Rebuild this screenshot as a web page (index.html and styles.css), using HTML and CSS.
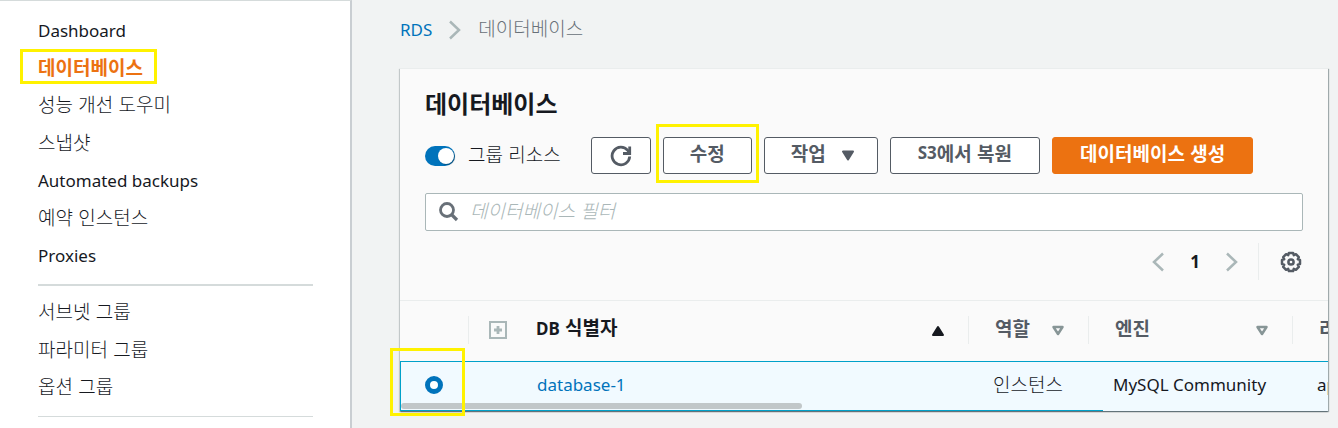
FILE: index.html
```html
<!DOCTYPE html>
<html lang="ko">
<head>
<meta charset="utf-8">
<title>RDS - 데이터베이스</title>
<link rel="stylesheet" href="styles.css">
</head>
<body>
<div class="app">
  <nav class="sidebar">
    <ul class="nav-list">
      <li><a href="#" lang="en">Dashboard</a></li>
      <li><a href="#" class="active">데이터베이스</a><span class="mark mark-nav"></span></li>
      <li><a href="#">성능 개선 도우미</a></li>
      <li><a href="#">스냅샷</a></li>
      <li><a href="#" lang="en">Automated backups</a></li>
      <li><a href="#">예약 인스턴스</a></li>
      <li><a href="#" lang="en">Proxies</a></li>
    </ul>
    <ul class="nav-list nav-groups">
      <li><a href="#">서브넷 그룹</a></li>
      <li><a href="#">파라미터 그룹</a></li>
      <li><a href="#">옵션 그룹</a></li>
    </ul>
    <ul class="nav-list nav-rest"></ul>
  </nav>

  <main class="main">
    <div class="breadcrumb">
      <a href="#" lang="en">RDS</a>
      <svg width="12" height="20" viewBox="0 0 12 20" fill="none" stroke="#aab7b8" stroke-width="2.5"><path d="M1 1.500L10 10L1 18.500"/></svg>
      <span class="current">데이터베이스</span>
    </div>

    <section class="panel">
      <div class="panel-top">
        <h1>데이터베이스</h1>
        <div class="toolbar">
          <label class="toggle"><input type="checkbox" role="switch" checked><span>그룹 리소스</span></label>
          <button class="btn btn-icon" aria-label="새로 고침">
            <svg width="22" height="22" viewBox="0 0 22 22" fill="none" stroke="#545b64" stroke-width="2.800"><path d="M19.700 11.500A8.800 8.800 0 1 1 17.800 5.500L19.500 7.800"/><path d="M13 8.500H19.700V1.500"/></svg>
          </button>
          <div class="marked"><button class="btn">수정</button><span class="mark mark-btn"></span></div>
          <button class="btn btn-menu">작업
            <svg width="14" height="12" viewBox="0 0 14 12"><path d="M2 1.500H12L7 9.500Z" fill="#545b64" stroke="#545b64" stroke-width="2" stroke-linejoin="round"/></svg>
          </button>
          <button class="btn btn-wide"><span lang="en">S3</span>에서 복원</button>
          <button class="btn btn-wide btn-primary">데이터베이스 생성</button>
        </div>
        <label class="search">
          <svg width="20" height="20" viewBox="0 0 20 20" fill="none" stroke="#687078"><circle cx="8" cy="8" r="6.500" stroke-width="2.800"/><path d="M12.500 12.500L18 18" stroke-width="3.200"/></svg>
          <input type="text" placeholder="데이터베이스 필터" aria-label="데이터베이스 필터">
        </label>
        <div class="pager">
          <button class="plain" aria-label="이전"><svg width="12" height="20" viewBox="0 0 12 20" fill="none" stroke="#aab7b8" stroke-width="2.500"><path d="M11 1.500L2 10L11 18.500"/></svg></button>
          <button class="plain page" lang="en">1</button>
          <button class="plain" aria-label="다음"><svg width="12" height="20" viewBox="0 0 12 20" fill="none" stroke="#aab7b8" stroke-width="2.500"><path d="M1 1.500L10 10L1 18.500"/></svg></button>
          <button class="plain settings" aria-label="설정">
            <svg width="22" height="22" viewBox="0 0 22 22" fill="none" stroke="#545b64" stroke-width="2.500" stroke-linejoin="round"><path d="M8.900 2H13.100L13.800 4.200L15.900 3.200L18.800 6.100L17.800 8.200L20 8.900V13.100L17.800 13.800L18.800 15.900L15.900 18.800L13.800 17.800L13.100 20H8.900L8.200 17.800L6.100 18.800L3.200 15.900L4.200 13.800L2 13.100V8.900L4.200 8.200L3.200 6.100L6.100 3.200L8.200 4.200Z"/><circle cx="11" cy="11" r="2.600"/></svg>
          </button>
        </div>
      </div>

      <div class="table-frame">
        <div class="table-clip">
          <table>
            <colgroup><col class="c-pick"><col class="c-id"><col class="c-role"><col class="c-engine"><col class="c-region"></colgroup>
            <thead>
              <tr>
                <th></th>
                <th class="sorted"><div class="head">
                  <svg class="expand" width="18" height="18" viewBox="0 0 18 18" fill="none" stroke="#aab7b8" stroke-width="2"><rect x="1" y="1" width="16" height="16"/><path d="M9 5V13M5 9H13" stroke-width="2.800"/></svg>
                  <span><span lang="en">DB</span> 식별자</span>
                  <svg class="sort" width="14" height="12" viewBox="0 0 14 12"><path d="M2 10L7 2L12 10Z" fill="#16191f" stroke="#16191f" stroke-width="2" stroke-linejoin="round"/></svg>
                </div></th>
                <th><div class="head">역할
                  <svg class="sort" width="14" height="12" viewBox="0 0 14 12"><path d="M2.500 2H11.500L7 9Z" fill="none" stroke="#879596" stroke-width="2.500" stroke-linejoin="round"/></svg>
                </div></th>
                <th><div class="head">엔진
                  <svg class="sort" width="14" height="12" viewBox="0 0 14 12"><path d="M2.500 2H11.500L7 9Z" fill="none" stroke="#879596" stroke-width="2.500" stroke-linejoin="round"/></svg>
                </div></th>
                <th><div class="head">리</div></th>
              </tr>
            </thead>
            <tbody>
              <tr>
                <td class="pick"><input type="radio" name="db" checked aria-label="database-1"></td>
                <td class="id"><a href="#" lang="en">database-1</a></td>
                <td>인스턴스</td>
                <td lang="en">MySQL Community</td>
                <td lang="en">ap</td>
              </tr>
            </tbody>
          </table>
        </div>
        <span class="scroll-thumb"></span>
        <span class="mark mark-row"></span>
      </div>
    </section>
  </main>
</div>
</body>
</html>
```
FILE: styles.css
```css
* { box-sizing: border-box; }

body {
  margin: 0;
  background: #f1f3f3;
  color: #16191f;
  font: 300 19px/24px "Noto Sans CJK KR", sans-serif;
}

[lang="en"] { font-family: "Noto Sans", sans-serif; font-size: 17px; font-weight: 400; }

a { color: #0073bb; text-decoration: none; }
svg { display: block; flex: none; }
button { font: inherit; color: inherit; cursor: pointer; }

.app { display: flex; min-height: 100vh; }

/* Side navigation */
.sidebar {
  flex: none;
  width: 352px;
  padding: 11px 37px 0 38px;
  background: #fff;
  border-top: 1px solid #d5dbdb;
  border-right: 2px solid #c9ced2;
}
.nav-list { list-style: none; margin: 0; padding: 0; }
.nav-list li { position: relative; display: flex; align-items: center; height: 37px; }
.nav-list li:nth-child(even) { height: 38px; }
.nav-list a { color: #16191f; }
.nav-list a:not([lang]) { padding-bottom: 3px; }
.nav-list .active { color: #ec7211; font-weight: 700; }
.nav-groups { margin-top: 10px; padding: 8px 0 10px; border-top: 2px solid #d5dbdb; }
.nav-rest { border-top: 1px solid #d5dbdb; }

/* Yellow call-out frames */
.mark { position: absolute; border: 3px solid #fff200; pointer-events: none; }
.mark-nav { left: -18px; top: 0; width: 137px; height: 35px; }
.mark-btn { inset: -13px -7px -9px; }
.mark-row { left: -10px; top: 47px; width: 75px; height: 68px; }

.main { flex: 1; min-width: 0; padding: 18px 10px 16px 48px; }

.breadcrumb { display: flex; align-items: center; gap: 17px; height: 24px; margin-bottom: 26px; }
.current { padding-bottom: 4px; color: #687078; }

/* Database panel */
.panel {
  background: #fafafa;
  border-top: 1px solid #eaeded;
  box-shadow: 0 1px 1px 0 rgba(0, 28, 36, .3), 1px 1px 1px 0 rgba(0, 28, 36, .3), -1px 1px 1px 0 rgba(0, 28, 36, .15);
}
.panel-top { padding: 18px 25px 20px; border-bottom: 1px solid #eaeded; }
h1 { margin: 0 0 18px; font-size: 24px; line-height: 32px; font-weight: 700; }

.toolbar { display: flex; align-items: center; gap: 12px; margin-bottom: 19px; }
.toggle { display: flex; align-items: center; gap: 13px; margin-right: 18px; }
.toggle span { padding-bottom: 4px; }
.toggle input {
  appearance: none;
  display: flex;
  justify-content: flex-end;
  width: 30px;
  height: 20px;
  margin: 0;
  padding: 2px 1px;
  border-radius: 10px;
  background: #0073bb;
}
.toggle input::before {
  content: "";
  width: 16px;
  height: 16px;
  border-radius: 50%;
  background: #fff;
  box-shadow: 1px 1px 1px rgba(0, 0, 0, .3);
}
.btn {
  display: flex;
  align-items: center;
  justify-content: center;
  height: 37px;
  padding: 0 26px 5px;
  border: 1px solid #545b64;
  border-radius: 3px;
  background: #fff;
  color: #545b64;
  font-weight: 700;
  white-space: nowrap;
}
.btn-icon { width: 60px; padding: 0; }
.btn-menu { gap: 15px; padding-right: 22px; }
.btn-menu svg { margin-top: 6px; }
.btn-wide { padding-left: 27px; padding-right: 27px; }
.btn-primary { border-color: #ec7211; background: #ec7211; color: #fff; }
.btn [lang], .head [lang], .plain.page { font-weight: 700; }
.marked { position: relative; }

.search {
  display: flex;
  align-items: center;
  gap: 11px;
  height: 38px;
  padding: 0 13px;
  border: 1px solid #aab7b8;
  border-radius: 2px;
  background: #fff;
}
.search input {
  flex: 1;
  min-width: 0;
  height: 32px;
  padding: 0 0 6px;
  border: 0;
  outline: 0;
  background: none;
  font: inherit;
}
.search input::placeholder { color: #aab7b8; font-style: italic; opacity: 1; }

.pager { display: flex; align-items: center; justify-content: flex-end; height: 37px; margin-top: 12px; }
.plain { display: flex; align-items: center; padding: 0; border: 0; background: none; }
.page { margin: 0 26px; }
.settings { height: 37px; margin-left: 20px; padding: 0 1px 0 21px; border-left: 1px solid #eaeded; }

/* Table */
.table-frame { position: relative; }
.table-clip { overflow: hidden; }
table { width: 100%; table-layout: fixed; border-collapse: separate; border-spacing: 0; }
.c-pick { width: 68px; }
.c-id { width: 500px; }
.c-role { width: 120px; }
.c-engine { width: 204px; }
th { height: 60px; padding: 0 0 2px; color: #545b64; text-align: left; }
.sorted { color: #16191f; }
.head {
  display: flex;
  align-items: center;
  height: 28px;
  padding: 0 23px 4px 26px;
  border-left: 1px solid #eaeded;
}
.sorted .head { padding-left: 20px; }
.expand { margin: 4px 29px 0 0; }
.sort { margin: 6px 0 0 auto; }
td {
  height: 50px;
  padding: 0 0 6px 25px;
  background: #f1faff;
  border-top: 1px solid #00a1c9;
  white-space: nowrap;
}
td[lang] { padding-bottom: 4px; }
.pick { border-left: 1px solid #00a1c9; padding: 0 0 4px 24px; }
.id { padding-left: 69px; }
.pick input {
  appearance: none;
  display: block;
  width: 18px;
  height: 18px;
  margin: 0;
  border: 5px solid #0073bb;
  border-radius: 50%;
  background: #fff;
}
.table-frame::after {
  content: "";
  position: absolute;
  left: 0;
  bottom: 0;
  width: 703px;
  height: 1px;
  background: #00a1c9;
}
.scroll-thumb {
  position: absolute;
  left: 1px;
  bottom: 2px;
  width: 401px;
  height: 6px;
  border-radius: 3px;
  background: #c1c7c9;
}
.mark-row { z-index: 1; }
```
